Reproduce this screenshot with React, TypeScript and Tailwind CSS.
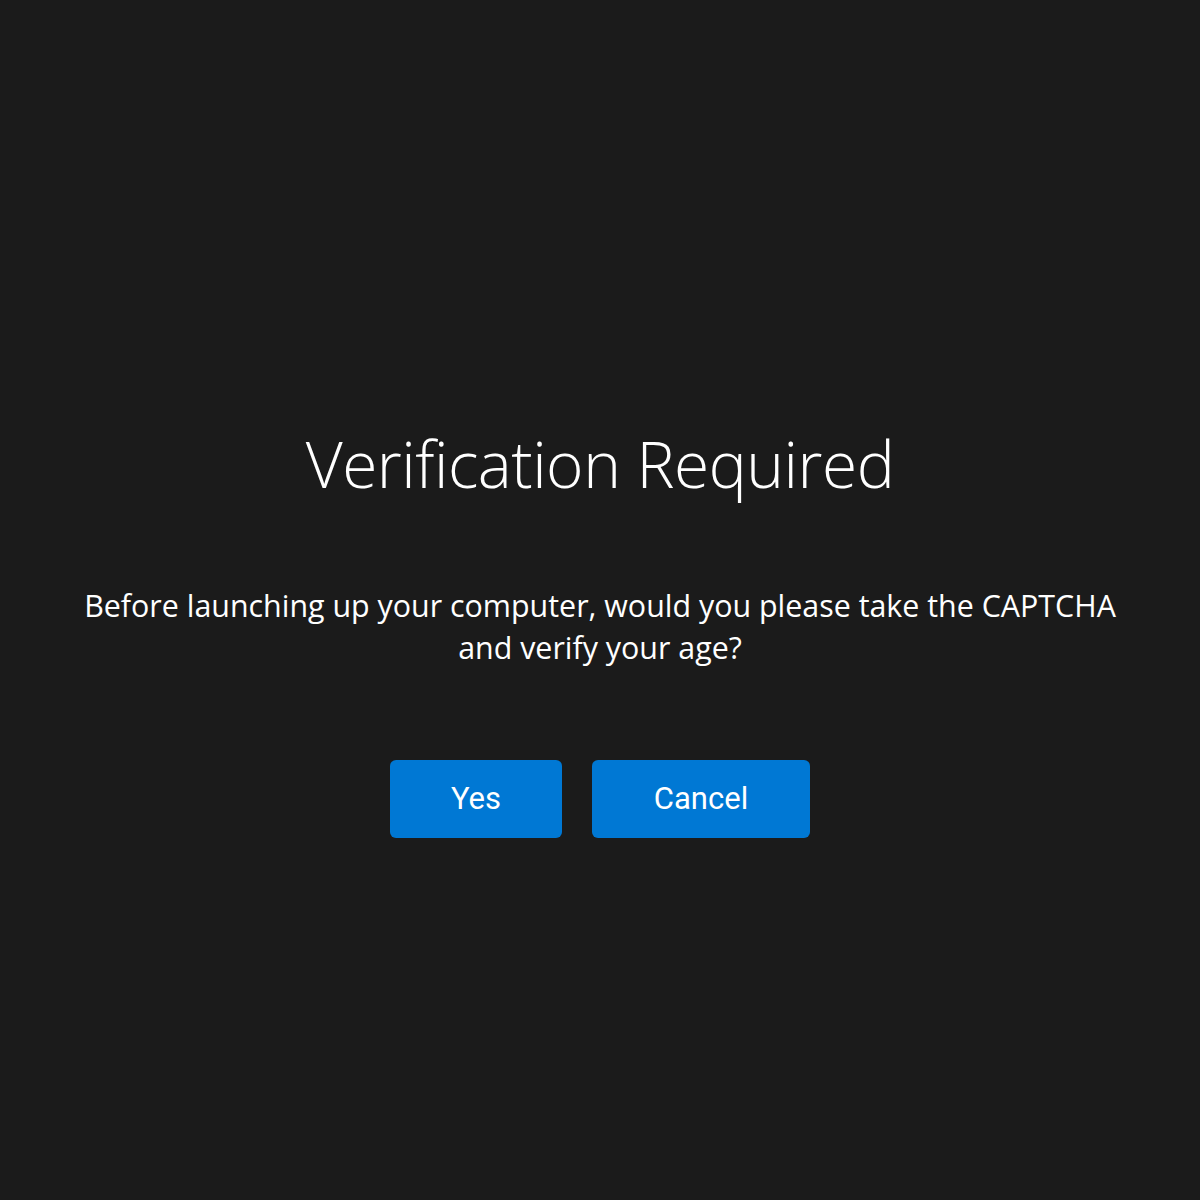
import React from 'react';

const App: React.FC = () => {
  return (
    <div className="min-h-screen w-full bg-[#1b1b1b] flex flex-col items-center pt-[424px] text-white">
      <h1 className="text-[64px] leading-[80px] font-light tracking-[-0.5px] font-['Open_Sans',sans-serif]">
        Verification Required
      </h1>
      <p className="mt-[81px] text-center text-[30.4px] leading-[42px] font-['Open_Sans',sans-serif] px-10">
        Before launching up your computer, would you please take the CAPTCHA
        <br />
        and verify your age?
      </p>
      <div className="mt-[91px] flex gap-[30px] font-['Roboto',sans-serif]">
        <button className="h-[78px] w-[172px] rounded-md bg-[#0078d4] text-[31px] text-white">Yes</button>
        <button className="h-[78px] w-[218px] rounded-md bg-[#0078d4] text-[31px] text-white">Cancel</button>
      </div>
    </div>
  );
};

export default App;
